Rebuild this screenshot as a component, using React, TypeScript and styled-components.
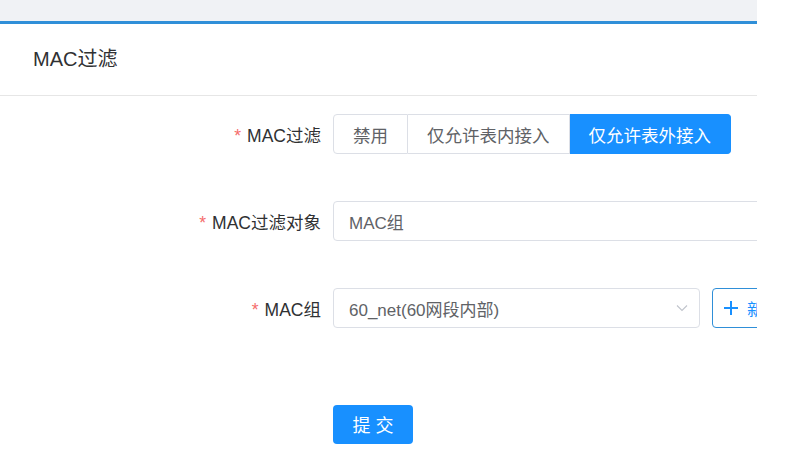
import React, { useState } from "react";
import styled, { createGlobalStyle } from "styled-components";

const GlobalStyle = createGlobalStyle`
  html, body {
    margin: 0;
    padding: 0;
    background: #ffffff;
    font-family: "Liberation Sans", "Noto Sans CJK SC", sans-serif;
  }
`;

const modes = ["禁用", "仅允许表内接入", "仅允许表外接入"];

export default function App() {
  const [mode, setMode] = useState<number>(2);
  return (
    <>
      <GlobalStyle />
      <StyledPage>
        <StyledTopBand />
        <StyledCard>
          <StyledHeader>MAC过滤</StyledHeader>
          <StyledForm>
            <StyledRow>
              <StyledLabel>MAC过滤</StyledLabel>
              <StyledRadioGroup>
                {modes.map((m, i) => (
                  <StyledRadio
                    key={m}
                    active={i === mode}
                    onClick={() => setMode(i)}
                  >
                    {m}
                  </StyledRadio>
                ))}
              </StyledRadioGroup>
            </StyledRow>
            <StyledRow>
              <StyledLabel>MAC过滤对象</StyledLabel>
              <StyledInput value="MAC组" readOnly />
            </StyledRow>
            <StyledRow>
              <StyledLabel>MAC组</StyledLabel>
              <StyledSelect>
                <span>60_net(60网段内部)</span>
                <svg width="14" height="14" viewBox="0 0 14 14">
                  <path
                    d="M2 4.5 L7 9.5 L12 4.5"
                    fill="none"
                    stroke="#c0c4cc"
                    strokeWidth="1.1"
                  />
                </svg>
              </StyledSelect>
              <StyledAddButton>
                <svg width="16" height="16" viewBox="0 0 16 16">
                  <path
                    d="M8 1 V15 M1 8 H15"
                    stroke="#1890ff"
                    strokeWidth="2"
                  />
                </svg>
                新建
              </StyledAddButton>
            </StyledRow>
            <StyledSubmitRow>
              <StyledSubmit>提 交</StyledSubmit>
            </StyledSubmitRow>
          </StyledForm>
        </StyledCard>
      </StyledPage>
    </>
  );
}

const StyledPage = styled.div`
  width: 757px;
  height: 451px;
  overflow: hidden;
  background: #ffffff;
`;

const StyledTopBand = styled.div`
  height: 21px;
  background: #f0f2f5;
`;

const StyledCard = styled.section`
  border-top: 3px solid #2f8fd8;
  background: #ffffff;
`;

const StyledHeader = styled.div`
  height: 71px;
  line-height: 71px;
  padding-left: 33px;
  font-size: 20px;
  color: #303133;
  border-bottom: 1px solid #e6e6e6;
`;

const StyledForm = styled.div`
  display: flex;
  flex-direction: column;
  gap: 47px;
  padding-top: 18px;
`;

const StyledRow = styled.div`
  display: flex;
  align-items: center;
  height: 40px;
`;

const StyledSubmitRow = styled(StyledRow)`
  margin-top: 29px;
  padding-left: 333px;
`;

const StyledLabel = styled.label`
  width: 333px;
  flex-shrink: 0;
  padding-right: 12px;
  box-sizing: border-box;
  text-align: right;
  font-size: 17.5px;
  color: #303133;
  white-space: nowrap;
  &::before {
    content: "*";
    color: #f56c6c;
    margin-right: 6px;
  }
`;

const StyledRadioGroup = styled.div`
  display: flex;
`;

const StyledRadio = styled.div<{ active: boolean }>`
  height: 40px;
  box-sizing: border-box;
  padding: 0 19px;
  display: flex;
  align-items: center;
  font-size: 17.5px;
  cursor: pointer;
  color: ${({ active }) => (active ? "#ffffff" : "#606266")};
  background: ${({ active }) => (active ? "#1890ff" : "#ffffff")};
  border: 1px solid ${({ active }) => (active ? "#1890ff" : "#dcdfe6")};
  border-left-width: 0;
  &:first-child {
    border-left-width: 1px;
    border-radius: 4px 0 0 4px;
  }
  &:last-child {
    border-radius: 0 4px 4px 0;
  }
`;

const StyledInput = styled.input`
  width: 520px;
  flex-shrink: 0;
  height: 40px;
  box-sizing: border-box;
  padding: 0 15px;
  border: 1px solid #dcdfe6;
  border-radius: 4px;
  font-family: inherit;
  font-size: 17px;
  color: #606266;
  outline: none;
`;

const StyledSelect = styled.div`
  width: 367px;
  flex-shrink: 0;
  height: 40px;
  box-sizing: border-box;
  padding: 0 10px 0 15px;
  border: 1px solid #dcdfe6;
  border-radius: 4px;
  display: flex;
  align-items: center;
  justify-content: space-between;
  font-size: 17px;
  color: #606266;
`;

const StyledAddButton = styled.button`
  margin-left: 12px;
  flex-shrink: 0;
  height: 40px;
  box-sizing: border-box;
  padding: 0 16px 0 10px;
  display: flex;
  align-items: center;
  gap: 8px;
  background: #ffffff;
  border: 1px solid #2f8fd8;
  border-radius: 4px;
  font-family: inherit;
  font-size: 17px;
  color: #1890ff;
`;

const StyledSubmit = styled.button`
  width: 80px;
  height: 39px;
  border: none;
  border-radius: 4px;
  background: #1890ff;
  color: #ffffff;
  font-family: inherit;
  font-size: 18px;
  cursor: pointer;
`;
